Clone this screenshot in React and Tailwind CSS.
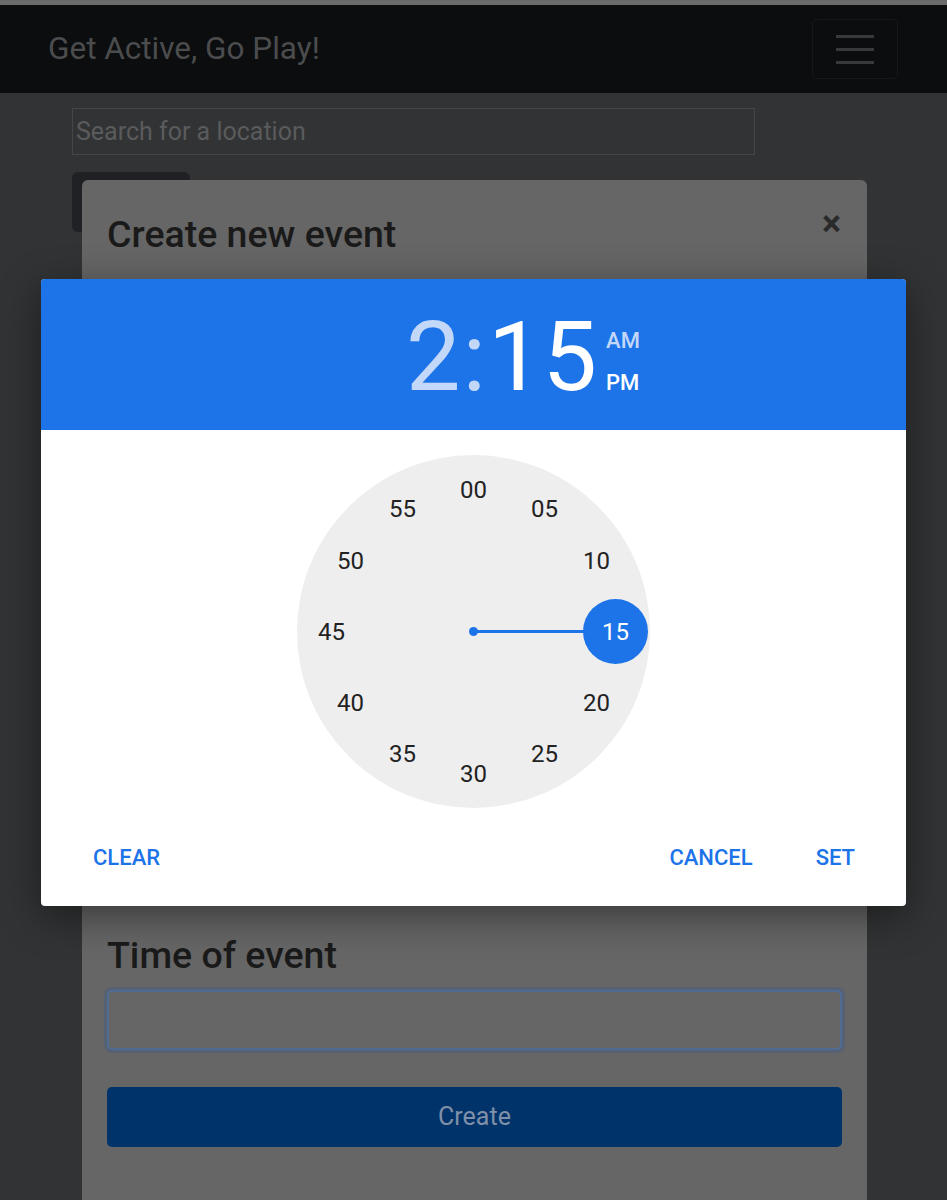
import React from 'react'

const MINUTES = ['00', '05', '10', '15', '20', '25', '30', '35', '40', '45', '50', '55']
const DIAL = 353
const RADIUS = 142

function ClockFace({ selected = '15' }) {
  const c = DIAL / 2
  return (
    <div className="relative mx-auto w-[353px] h-[353px] rounded-full bg-[#eeeeee]">
      {/* hand */}
      <div className="absolute left-[176px] top-[175px] w-[142px] h-[3px] bg-[#1c74e8]" />
      <div className="absolute left-[172px] top-[172px] w-[9px] h-[9px] rounded-full bg-[#1c74e8]" />
      <div className="absolute left-[286px] top-[144px] w-[65px] h-[65px] rounded-full bg-[#1c74e8]" />
      {MINUTES.map((m, i) => {
        const a = (i * 30 * Math.PI) / 180
        const x = c + RADIUS * Math.sin(a)
        const y = c - RADIUS * Math.cos(a)
        return (
          <div
            key={m}
            className={`absolute w-[44px] h-[30px] -ml-[22px] -mt-[15px] flex items-center justify-center text-[24px] ${m === selected ? 'text-white' : 'text-[#222222]'}`}
            style={{ left: x, top: y }}
          >
            {m}
          </div>
        )
      })}
    </div>
  )
}

export default function App() {
  return (
    <div
      className="relative w-[947px] h-[1200px] overflow-hidden bg-[#323334]"
      style={{ fontFamily: 'Roboto, "Liberation Sans", sans-serif' }}
    >
      <div className="h-[5px] bg-[#6b6b6b]" />

      {/* Navbar */}
      <nav className="h-[88px] bg-[#0b0d0f] flex items-center justify-between pl-[48px] pr-[49px]">
        <span className="text-[31.5px] text-[#4b4c4d] leading-none">Get Active, Go Play!</span>
        <button className="w-[86px] h-[60px] rounded-[5px] border border-[#16181a] flex flex-col items-center justify-center gap-[10px]">
          <span className="block w-[38px] h-[3px] bg-[#38393a]" />
          <span className="block w-[38px] h-[3px] bg-[#38393a]" />
          <span className="block w-[38px] h-[3px] bg-[#38393a]" />
        </button>
      </nav>

      {/* Page behind */}
      <div className="px-[72px] pt-[15px]">
        <div className="w-[683px] h-[47px] border border-[#454647] flex items-center pl-[3px] text-[25px] text-[#5a5b5c]">
          Search for a location
        </div>
        <div className="mt-[17px] w-[118px] h-[60px] rounded-[6px] bg-[#1f2124]" />
      </div>

      {/* Bootstrap modal */}
      <div className="absolute left-[82px] top-[180px] w-[785px] bottom-0 bg-[#666666] rounded-t-[6px]">
        <div className="flex items-center justify-between pl-[25px] pr-[26px] pt-[34px]">
          <h2 className="text-[37.5px] leading-[40px] font-medium text-[#1a1a1a]">Create new event</h2>
          <span className="text-[36px] leading-none font-bold text-[#2a2a2a] -mt-[20px]">×</span>
        </div>
        <div className="px-[25px]">
          <div className="h-[681px]" />
          <label className="block text-[37.5px] leading-[40px] font-medium text-[#1a1a1a]">Time of event</label>
          <div className="mt-[15px] h-[60px] rounded-[5px] border-2 border-[#4f6d93] shadow-[0_0_0_3px_rgba(50,90,150,0.3)]" />
          <button className="mt-[37px] w-full h-[60px] rounded-[5px] bg-[#00336a] text-[25px] text-[#7f90a8]">
            Create
          </button>
        </div>
      </div>

      {/* Time picker dialog */}
      <div className="absolute left-[41px] top-[279px] w-[865px] bg-white rounded-[4px] overflow-hidden shadow-[0_10px_40px_rgba(0,0,0,0.45)]">
        <div className="h-[151px] bg-[#1c74e8] flex items-center pl-[365px] pt-[6px]">
          <div className="flex items-baseline text-[97px] leading-none">
            <span className="text-[#c3d8f8]">2</span>
            <span className="text-[#c3d8f8] mx-[2px]">:</span>
            <span className="text-white">15</span>
          </div>
          <div className="ml-[9px] mt-[8px] flex flex-col gap-[20px] text-[22px] font-medium leading-none">
            <span className="text-[#c3d8f8]">AM</span>
            <span className="text-white">PM</span>
          </div>
        </div>
        <div className="pt-[25px]">
          <ClockFace />
        </div>
        <div className="h-[98px] flex items-center pl-[52px] pr-[51px] text-[22px] font-medium text-[#1c74e8]">
          <span>CLEAR</span>
          <span className="ml-auto">CANCEL</span>
          <span className="ml-[63px]">SET</span>
        </div>
      </div>
    </div>
  )
}
